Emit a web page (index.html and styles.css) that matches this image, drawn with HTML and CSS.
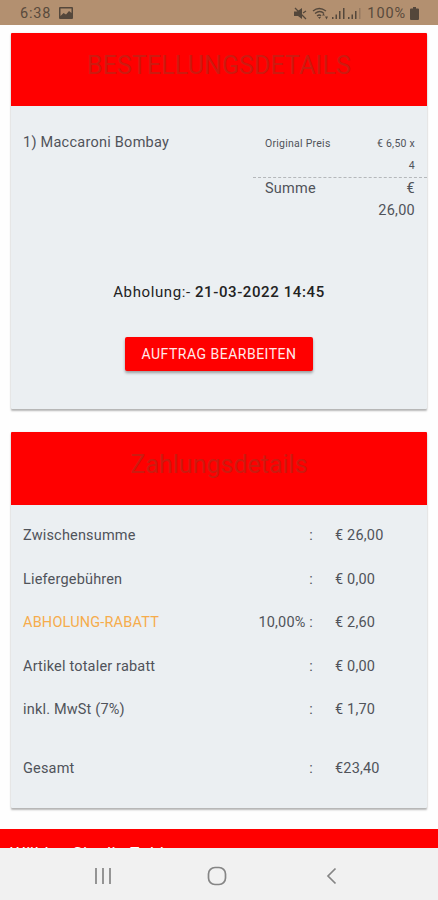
FILE: index.html
```html
<!DOCTYPE html>
<html lang="de">

<head>
    <meta charset="utf-8">
    <title>Bestellungsdetails</title>
    <link rel="stylesheet" href="styles.css">
</head>
<body>
    <div class="status-bar">
        <span class="time">6:38</span>
        <svg class="picture-icon" width="14" height="12" viewBox="0 0 14 12">
            <path fill-rule="evenodd" d="M1 0h12a1 1 0 0 1 1 1v10a1 1 0 0 1-1 1H1a1 1 0 0 1-1-1V1a1 1 0 0 1 1-1zM1.500 1.500V9l3-3 2.500 1.500 3-3.500 2.500 2V1.500z" />
        </svg>
        <div class="status-icons">
            <svg width="13" height="13" viewBox="0 0 13 13">
                <path d="M0 4.500h3L8 1v11L4 9H0z" />
                <path class="line" d="M1 1l11 11M9 6l3-2" />
            </svg>
            <svg class="wifi" width="17" height="13" viewBox="0 0 17 13">
                <path class="line" d="M1 4q6-5 13 0M3 6.500q5-4 9 0M5 9q2.500-2 4 0" />
                <path d="M6 10h3l-1.500 2zM10 8.500l1.500-2 1.500 2zM13 9.500h3l-1.500 3z" />
            </svg>
            <svg class="signal" width="13" height="12" viewBox="0 0 13 12">
                <path d="M0 10h1.500v2H0zM3.500 7.500h1.500v4.500H3.500zM7 4h1.500v8H7zM11 1h1.500v11H11z" />
            </svg>
            <svg class="signal" width="13" height="12" viewBox="0 0 13 12">
                <path d="M0 10h1.500v2H0zM3.500 7.500h1.500v4.500H3.500zM7 4h1.500v8H7z" />
                <path class="faded" d="M11 1h1.500v11H11z" />
            </svg>
            <span class="percent">100%</span>
            <svg width="9" height="13" viewBox="0 0 9 13">
                <path d="M3 0h3v1.500h2q1 0 1 1V12q0 1-1 1H1q-1 0-1-1V2.500q0-1 1-1h2z" />
            </svg>
        </div>
    </div>

    <div class="content">
        <div class="card order">
            <div class="header upper">BESTELLUNGSDETAILS</div>
            <div class="items">
                <div class="item-name">1) Maccaroni Bombay</div>
                <div class="prices">
                    <div class="price-row small">
                        <span>Original Preis</span>
                        <span class="amount">€ 6,50 x<br>4</span>
                    </div>
                    <div class="price-row total">
                        <span>Summe</span>
                        <span class="amount">€<br>26,00</span>
                    </div>
                </div>
            </div>
            <div class="pickup">Abholung:- <b>21-03-2022 14:45</b></div>
            <button class="edit-order" type="button">AUFTRAG BEARBEITEN</button>
        </div>

        <div class="card payment">
            <div class="header">Zahlungsdetails</div>
            <div class="rows">
                <div class="row"><span>Zwischensumme</span><span class="colon">:</span><span>€ 26,00</span></div>
                <div class="row"><span>Liefergebühren</span><span class="colon">:</span><span>€ 0,00</span></div>
                <div class="row"><span class="discount">ABHOLUNG-RABATT</span><span class="colon">10,00% :</span><span>€ 2,60</span></div>
                <div class="row"><span>Artikel totaler rabatt</span><span class="colon">:</span><span>€ 0,00</span></div>
                <div class="row"><span>inkl. MwSt (7%)</span><span class="colon">:</span><span>€ 1,70</span></div>
                <div class="row sum"><span>Gesamt</span><span class="colon">:</span><span>€23,40</span></div>
            </div>
        </div>

        <div class="pay-method">Wählen Sie die Zahlungsart</div>
    </div>

    <div class="nav-bar">
        <svg width="18" height="18" viewBox="0 0 18 18">
            <path d="M2 1v16M9 1v16M16 1v16" />
        </svg>
        <svg class="home" width="20" height="20" viewBox="0 0 20 20">
            <rect x="1.500" y="1.500" width="17" height="17" rx="6.500" />
        </svg>
        <svg width="11" height="18" viewBox="0 0 11 18">
            <path d="M9.500 1.500L2 9l7.500 7.500" />
        </svg>
    </div>
</body>

</html>
```
FILE: styles.css
```css
body {
    margin: 0;
    height: 900px;
    display: flex;
    flex-direction: column;
    overflow: hidden;
    background-color: #fefefe;
    color: #50535a;
    font-family: Roboto, sans-serif;
    font-size: 14.5px;
    letter-spacing: 0.18px;
}

.status-bar {
    height: 25px;
    flex: none;
    box-sizing: border-box;
    padding: 1px 19px 0 20px;
    display: flex;
    align-items: center;
    background-color: #b39070;
    color: #594a3c;
    fill: #54473b;
}

.time {
    letter-spacing: 0.8px;
}

.picture-icon {
    margin-left: 8px;
}

.status-icons {
    display: flex;
    align-items: center;
    margin-left: auto;
}

.wifi {
    margin-left: 5px;
}

.signal {
    margin-left: 3px;
}

.line {
    fill: none;
    stroke: #54473b;
    stroke-width: 1.3;
}

.faded {
    opacity: 0.3;
}

.percent {
    margin: 0 4px 0 6px;
    letter-spacing: 0.9px;
}

.content {
    height: 823px;
    flex: none;
    overflow: hidden;
}

.card {
    width: 416px;
    margin-left: 11px;
    background-color: #ebeff2;
    border-radius: 1px;
    box-shadow: 0 2px 2px rgba(0, 0, 0, 0.28), 0 0 2px rgba(0, 0, 0, 0.1);
    overflow: hidden;
}

.order {
    height: 376px;
    margin-top: 8px;
}

.payment {
    height: 376px;
    margin-top: 23px;
}

.header {
    height: 73px;
    line-height: 65px;
    background-color: #ff0000;
    color: #cc1b10;
    text-align: center;
    font-size: 25px;
    letter-spacing: 0;
}

.upper {
    letter-spacing: 0.1px;
}

.items {
    height: 166px;
    display: flex;
    justify-content: space-between;
}

.item-name {
    padding: 26px 0 0 12px;
    line-height: 22px;
    letter-spacing: 0.25px;
}

.prices {
    width: 174px;
    padding-top: 27px;
    line-height: 22px;
}

.price-row {
    display: flex;
    justify-content: space-between;
    padding: 0 12px;
}

.small {
    font-size: 10.5px;
    letter-spacing: 0.25px;
    border-bottom: 1px dashed #b5b8bb;
}

.total {
    letter-spacing: 0.25px;
}

.amount {
    text-align: right;
}

.pickup {
    height: 65px;
    line-height: 40px;
    text-align: center;
    color: #222222;
    font-size: 15px;
    letter-spacing: 0.6px;
}

.pickup b {
    font-weight: 500;
}

.edit-order {
    display: block;
    width: 188px;
    height: 34px;
    margin: 0 auto;
    padding: 0;
    border: none;
    border-radius: 2px;
    background-color: #ff0000;
    box-shadow: 0 2px 3px rgba(0, 0, 0, 0.35);
    color: #ffe9e9;
    font-family: inherit;
    font-size: 14px;
    font-weight: 400;
    letter-spacing: 0.5px;
}

.rows {
    padding: 9px 12px 0 12px;
}

.row {
    display: grid;
    grid-template-columns: 180px 110px 80px;
    line-height: 43.6px;
}

.row span:last-child {
    padding-left: 22px;
}

.colon {
    text-align: right;
}

.discount {
    color: #f6ac4c;
}

.sum {
    margin-top: 15px;
}

.pay-method {
    height: 40px;
    margin-top: 21px;
    padding: 14px 10px 0;
    background-color: #ff0000;
    color: #ffffff;
    font-size: 17px;
    letter-spacing: 0.35px;
}

.nav-bar {
    height: 52px;
    flex: none;
    box-sizing: border-box;
    padding: 4px 101px 0 94px;
    display: flex;
    align-items: center;
    justify-content: space-between;
    background-color: #f1f1f1;
    fill: none;
    stroke: #858585;
    stroke-width: 1.7;
}

.home {
    margin-right: 5px;
}
```
